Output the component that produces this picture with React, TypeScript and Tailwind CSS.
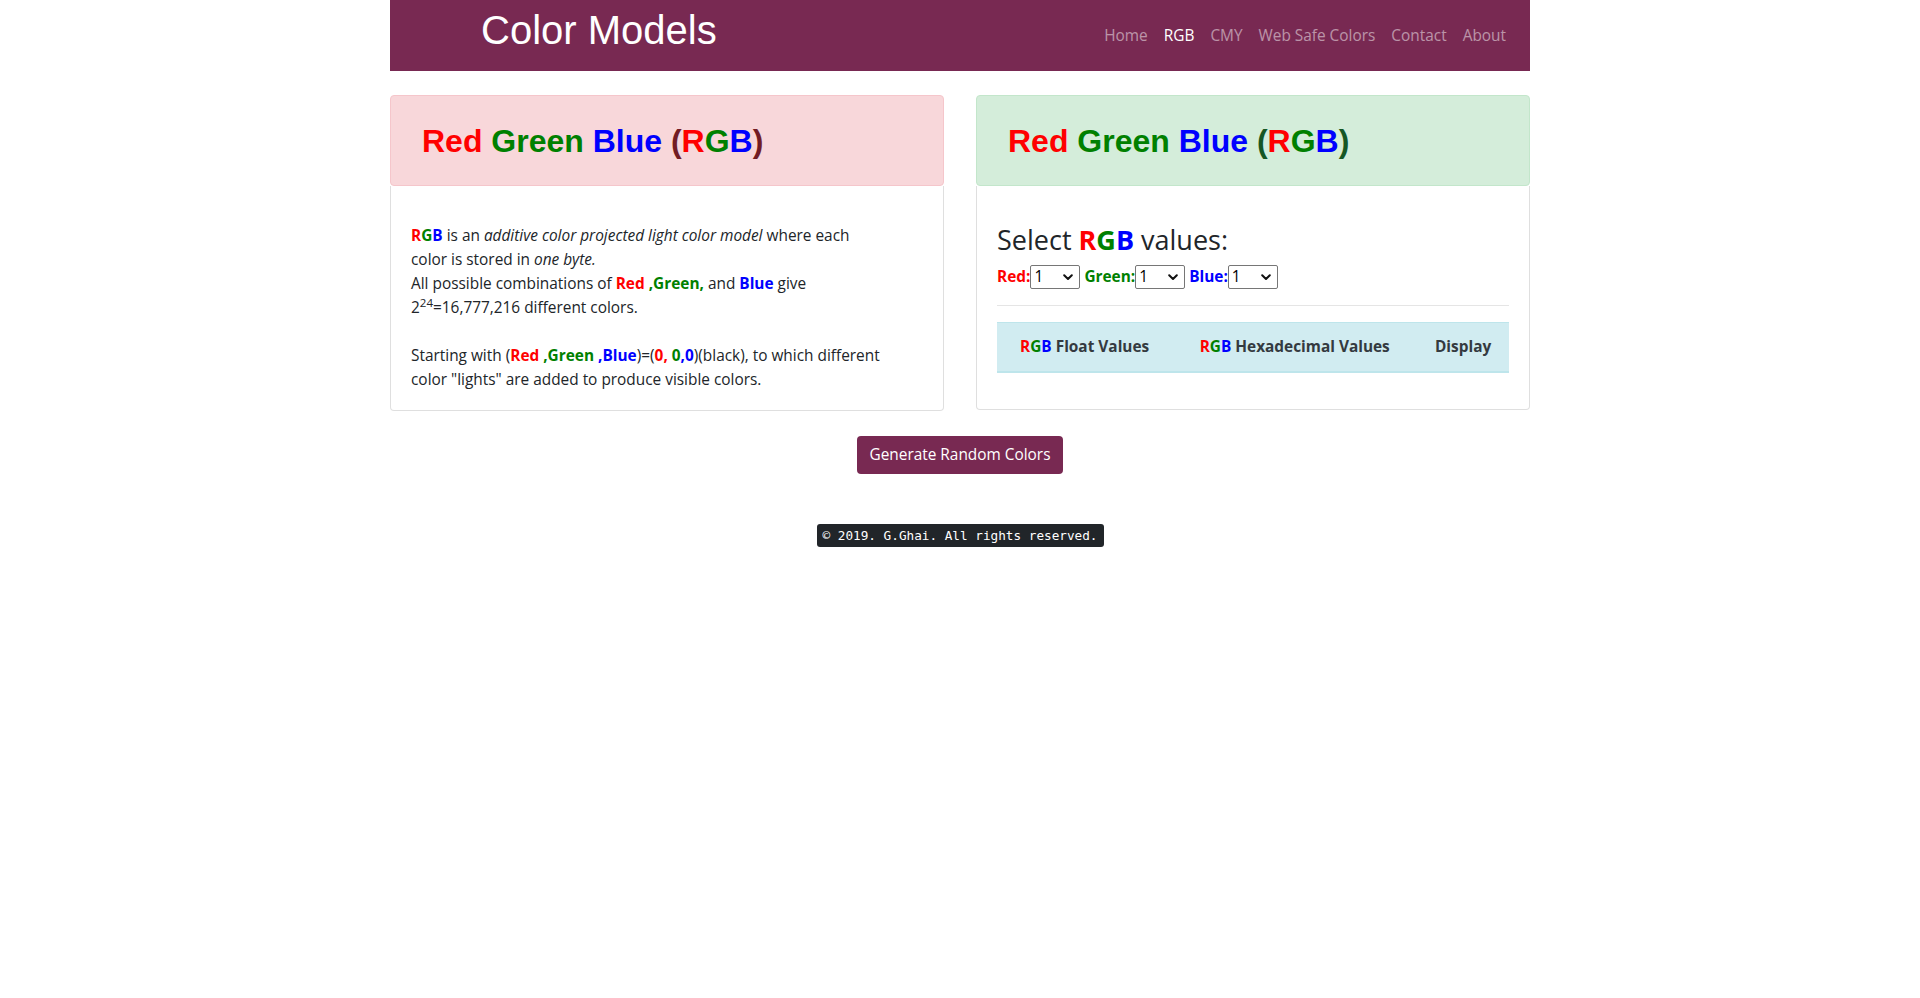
import React from "react";

const RGBWord = () => (
  <b className="font-bold">
    <span className="text-[#ff0000]">R</span>
    <span className="text-[#008000]">G</span>
    <span className="text-[#0000ff]">B</span>
  </b>
);

const Heading = ({ paren }: { paren: string }) => (
  <h2 className="font-['Liberation_Sans',Arial,sans-serif] text-[32px] font-bold leading-[38px] whitespace-nowrap">
    <span className="text-[#ff0000]">Red</span>{" "}
    <span className="text-[#008000]">Green</span>{" "}
    <span className="text-[#0000ff]">Blue</span>{" "}
    <span className={paren}>(</span>
    <span className="text-[#ff0000]">R</span>
    <span className="text-[#008000]">G</span>
    <span className="text-[#0000ff]">B</span>
    <span className={paren}>)</span>
  </h2>
);

const Chevron = () => (
  <svg width="10" height="7" viewBox="0 0 10 7" className="pointer-events-none absolute right-[7px] top-[9px]">
    <polyline points="1.2,1.2 5,5 8.8,1.2" fill="none" stroke="#111" strokeWidth="2" strokeLinecap="round" strokeLinejoin="round" />
  </svg>
);

const Sel = () => (
  <span className="relative inline-block h-[24px] w-[50px] align-top">
    <select
      defaultValue="1"
      className="h-[24px] w-[50px] appearance-none rounded-[2px] border border-[#767676] bg-white pl-[3px] text-[15.4px] leading-[22px] text-black outline-none"
    >
      {Array.from({ length: 10 }, (_, i) => (
        <option key={i} value={String(i + 1)}>
          {i + 1}
        </option>
      ))}
    </select>
    <Chevron />
  </span>
);

export default function App() {
  const links = ["Home", "RGB", "CMY", "Web Safe Colors", "Contact", "About"];
  return (
    <div className="min-h-screen bg-white font-['Open_Sans','Noto_Sans',sans-serif] text-[15.4px] leading-6 text-[#212529]">
      <div className="mx-auto w-[1140px]">
        <header className="flex h-[71px] items-start justify-between bg-[#782952]">
          <h1 className="ml-[91px] mt-[6px] font-['Liberation_Sans',Arial,sans-serif] text-[40px] font-normal leading-[48px] text-white">
            Color Models
          </h1>
          <nav className="mr-[16px] flex h-full items-center">
            {links.map((l) => (
              <a
                key={l}
                href="#"
                className={
                  l === "RGB"
                    ? "px-2 text-white"
                    : "px-2 text-[rgba(255,255,255,0.5)]"
                }
              >
                {l}
              </a>
            ))}
          </nav>
        </header>

        <div className="mt-[24px] flex items-start gap-[32px]">
          {/* Left card */}
          <div className="flex flex-1 flex-col">
            <div className="flex h-[91px] items-center rounded-[4px] border border-[#f5c6cb] bg-[#f8d7da] pl-[31px]">
              <Heading paren="text-[#721c24]" />
            </div>
            <div className="rounded-b-[4px] border-x border-b border-[rgba(0,0,0,0.125)] px-[20px] pb-[18px] pt-[38px]">
              <p className="whitespace-nowrap">
                <RGBWord /> is an <i>additive color projected light color model</i> where each
                <br />
                color is stored in <i>one byte.</i>
                <br />
                All possible combinations of <b className="text-[#ff0000]">Red </b>
                <b className="text-[#008000]">,Green,</b> and <b className="text-[#0000ff]">Blue</b> give
                <br />
                2<sup>24</sup>=16,777,216 different colors.
                <br />
                <br />
                Starting with (<b className="text-[#ff0000]">Red </b>
                <b className="text-[#008000]">,Green </b>
                <b className="text-[#0000ff]">,Blue</b>)=(
                <b className="text-[#ff0000]">0, </b>
                <b className="text-[#008000]">0</b>
                <b className="text-[#0000ff]">,0</b>)(black), to which different
                <br />
                color "lights" are added to produce visible colors.
              </p>
            </div>
          </div>

          {/* Right card */}
          <div className="flex flex-1 flex-col">
            <div className="flex h-[91px] items-center rounded-[4px] border border-[#c3e6cb] bg-[#d4edda] pl-[31px]">
              <Heading paren="text-[#155724]" />
            </div>
            <div className="rounded-b-[4px] border-x border-b border-[rgba(0,0,0,0.125)] px-[20px] pb-[20px] pt-[37px]">
              <h3 className="mb-[8px] text-[27px] font-medium leading-[34px]">
                Select <RGBWord /> values:
              </h3>
              <div className="h-[24px] whitespace-nowrap leading-6">
                <b className="text-[#ff0000]">Red:</b>
                <Sel /> <b className="text-[#008000]">Green:</b>
                <Sel /> <b className="text-[#0000ff]">Blue:</b>
                <Sel />
              </div>
              <hr className="mb-[16px] mt-[16px] border-0 border-t border-[rgba(0,0,0,0.1)]" />
              <table className="mb-[16px] w-full border-collapse">
                <thead>
                  <tr className="bg-[#d1ecf1]">
                    <th className="border-b-2 border-t border-[#bee5eb] px-3 py-3 text-center font-bold leading-6 text-[#343a40]">
                      <RGBWord /> Float Values
                    </th>
                    <th className="border-b-2 border-t border-[#bee5eb] px-3 py-3 text-center font-bold leading-6 text-[#343a40]">
                      <RGBWord /> Hexadecimal Values
                    </th>
                    <th className="border-b-2 border-t border-[#bee5eb] px-3 py-3 text-center font-bold leading-6 text-[#343a40]">
                      Display
                    </th>
                  </tr>
                </thead>
                <tbody></tbody>
              </table>
            </div>
          </div>
        </div>

        <div className="mt-[25px] flex justify-center">
          <button className="h-[38px] rounded-[4px] bg-[#782952] px-3 text-[15.4px] leading-6 text-white">
            Generate Random Colors
          </button>
        </div>

        <div className="mt-[50px] flex justify-center">
          <kbd className="inline-block h-[23px] rounded-[3px] bg-[#212529] px-[6px] font-['DejaVu_Sans_Mono',monospace] text-[12.7px] leading-[23px] text-white">
            © 2019. G.Ghai. All rights reserved.
          </kbd>
        </div>
      </div>
    </div>
  );
}
